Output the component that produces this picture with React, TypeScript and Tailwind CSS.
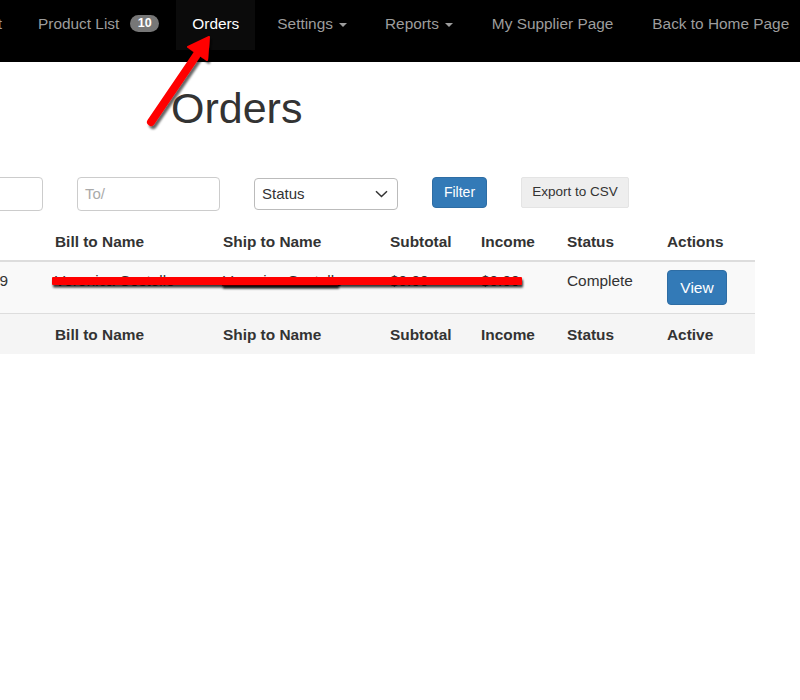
import React from "react";

function Caret() {
  return (
    <span className="ml-[6px] inline-block w-0 h-0 border-t-[4px] border-t-current border-x-[4px] border-x-transparent align-middle" />
  );
}

export default function App() {
  const cols = "grid grid-cols-[127px_168px_167px_91px_86px_100px_96px] w-[835px] ml-[-80px]";
  const heads = ["Order #", "Bill to Name", "Ship to Name", "Subtotal", "Income", "Status"];
  return (
    <div className="relative w-[800px] h-[700px] overflow-hidden bg-white text-[#333] font-['Liberation_Sans',Arial,sans-serif]">
      {/* Navbar */}
      <nav className="h-[62px] bg-black flex items-start text-[15.4px] leading-[22px] text-[#9d9d9d] whitespace-nowrap">
        <div className="w-[22px] h-[50px] flex justify-end pr-[20px] pt-[13px] shrink-0">
          <span>t</span>
        </div>
        <div className="h-[50px] px-4 pt-[13px] flex items-start shrink-0">
          <span>Product List</span>
          <span className="ml-[11px] mt-[2px] h-[17px] w-[29px] rounded-full bg-[#777] text-white text-[12.5px] font-bold leading-[17px] text-center">
            10
          </span>
        </div>
        <div className="ml-[1px] h-[50px] px-4 pt-[13px] bg-[#0b0b0b] text-white shrink-0">Orders</div>
        <div className="ml-[6px] h-[50px] px-4 pt-[13px] shrink-0">
          Settings
          <Caret />
        </div>
        <div className="ml-[6px] h-[50px] px-4 pt-[13px] shrink-0">
          Reports
          <Caret />
        </div>
        <div className="ml-[7px] h-[50px] px-4 pt-[13px] shrink-0">My Supplier Page</div>
        <div className="ml-[7px] h-[50px] px-4 pt-[13px] shrink-0">Back to Home Page</div>
      </nav>

      {/* Heading */}
      <h1 className="mt-[23px] pl-[171px] text-[43px] leading-[47px] font-normal text-[#333]">Orders</h1>

      {/* Filters */}
      <div className="mt-[45px] ml-[-100px] flex items-start gap-[34px] text-[15px]">
        <div className="w-[143px] h-[34px] rounded-[4px] border border-[#ccc] bg-white shrink-0" />
        <div className="w-[143px] h-[34px] rounded-[4px] border border-[#ccc] bg-white shrink-0 flex items-center pl-[7px] text-[#aaa]">
          To/
        </div>
        <div className="mt-[1px] w-[144px] h-[32px] rounded-[4px] border border-[#bbb] bg-white shrink-0 flex items-center justify-between pl-[7px] pr-[9px] text-[#333]">
          <span>Status</span>
          <svg width="13" height="8" viewBox="0 0 13 8" fill="none">
            <path d="M1 1.2 L6.5 6.5 L12 1.2" stroke="#333" strokeWidth="1.5" />
          </svg>
        </div>
        <div className="w-[55px] h-[31px] rounded-[4px] bg-[#337ab7] border border-[#2e6da4] text-white text-[14px] flex items-center justify-center shrink-0">
          Filter
        </div>
        <div className="w-[108px] h-[31px] rounded-[2px] bg-[#eeeeee] border border-[#e4e4e4] text-[#333] text-[13.5px] flex items-center justify-center shrink-0">
          Export to CSV
        </div>
      </div>

      {/* Table */}
      <div className="mt-[11px] text-[15.4px] leading-[22px]">
        <div className={`${cols} border-b-2 border-[#ddd] font-bold`}>
          {heads.map((h) => (
            <div key={h} className="px-2 pt-[9px] pb-[7px]">{h}</div>
          ))}
          <div className="px-2 pt-[9px] pb-[7px]">Actions</div>
        </div>
        <div className={`${cols} bg-[#f9f9f9] border-b border-[#ddd]`}>
          <div className="p-2 pl-[11px]">000000009</div>
          <div className="p-2">Veronica Costello</div>
          <div className="p-2">Veronica Costello</div>
          <div className="p-2">$0.00</div>
          <div className="p-2">$0.00</div>
          <div className="p-2">Complete</div>
          <div className="p-2">
            <div className="w-[60px] h-[35px] rounded-[4px] bg-[#337ab7] border border-[#2e6da4] text-white text-[15.5px] flex items-center justify-center">
              View
            </div>
          </div>
        </div>
        <div className={`${cols} bg-[#f5f5f5] font-bold`}>
          {heads.map((h) => (
            <div key={h} className="px-2 pt-[10px] pb-[8px]">{h}</div>
          ))}
          <div className="px-2 pt-[10px] pb-[8px]">Active</div>
        </div>
      </div>

      {/* Annotations */}
      <svg className="absolute left-0 top-0 pointer-events-none" width="800" height="700" viewBox="0 0 800 700">
        <defs>
          <filter id="sh" x="-20%" y="-50%" width="140%" height="200%">
            <feDropShadow dx="2" dy="3" stdDeviation="1.2" floodColor="#000" floodOpacity="0.6" />
          </filter>
          <filter id="sh2" x="-20%" y="-100%" width="140%" height="300%">
            <feDropShadow dx="1" dy="2.5" stdDeviation="0.9" floodColor="#000" floodOpacity="0.8" />
          </filter>
        </defs>
        <g filter="url(#sh)">
          <line x1="151" y1="122" x2="200" y2="50" stroke="#ff0000" strokeWidth="8" strokeLinecap="round" />
          <polygon points="209,37 188,47 207,60" fill="#ff0000" stroke="#ff0000" strokeWidth="2" strokeLinejoin="round" />
        </g>
        <g filter="url(#sh2)">
          <rect x="222" y="280" width="116" height="6" fill="#ff0000" />
        </g>
        <g filter="url(#sh2)">
          <rect x="52" y="277" width="470" height="8" rx="1" fill="#ff0000" />
        </g>
      </svg>
    </div>
  );
}
